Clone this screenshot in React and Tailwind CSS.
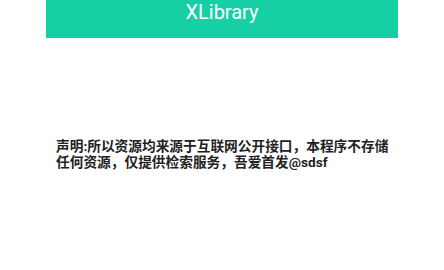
import React from 'react';

const App = () => {
  return (
    <div className="w-[444px] h-[270px] bg-white flex flex-col" style={{ fontFamily: 'Roboto, "Noto Sans CJK SC", sans-serif' }}>
      {/* Cabecera */}
      <div className="mx-[46px] h-[38px] bg-[#17cfa5] flex justify-center pt-[2px] shrink-0">
        <span className="text-white text-[20px] leading-[20px]">XLibrary</span>
      </div>

      {/* Aviso */}
      <div className="flex-1 flex items-center mx-[46px] pl-[10px] pr-[4px]">
        <p className="text-[13.7px] leading-[16.5px] font-bold text-[#222]">
          声明:所以资源均来源于互联网公开接口，本程序不存储任何资源，仅提供检索服务，吾爱首发@sdsf
        </p>
      </div>
    </div>
  );
};

export default App;
